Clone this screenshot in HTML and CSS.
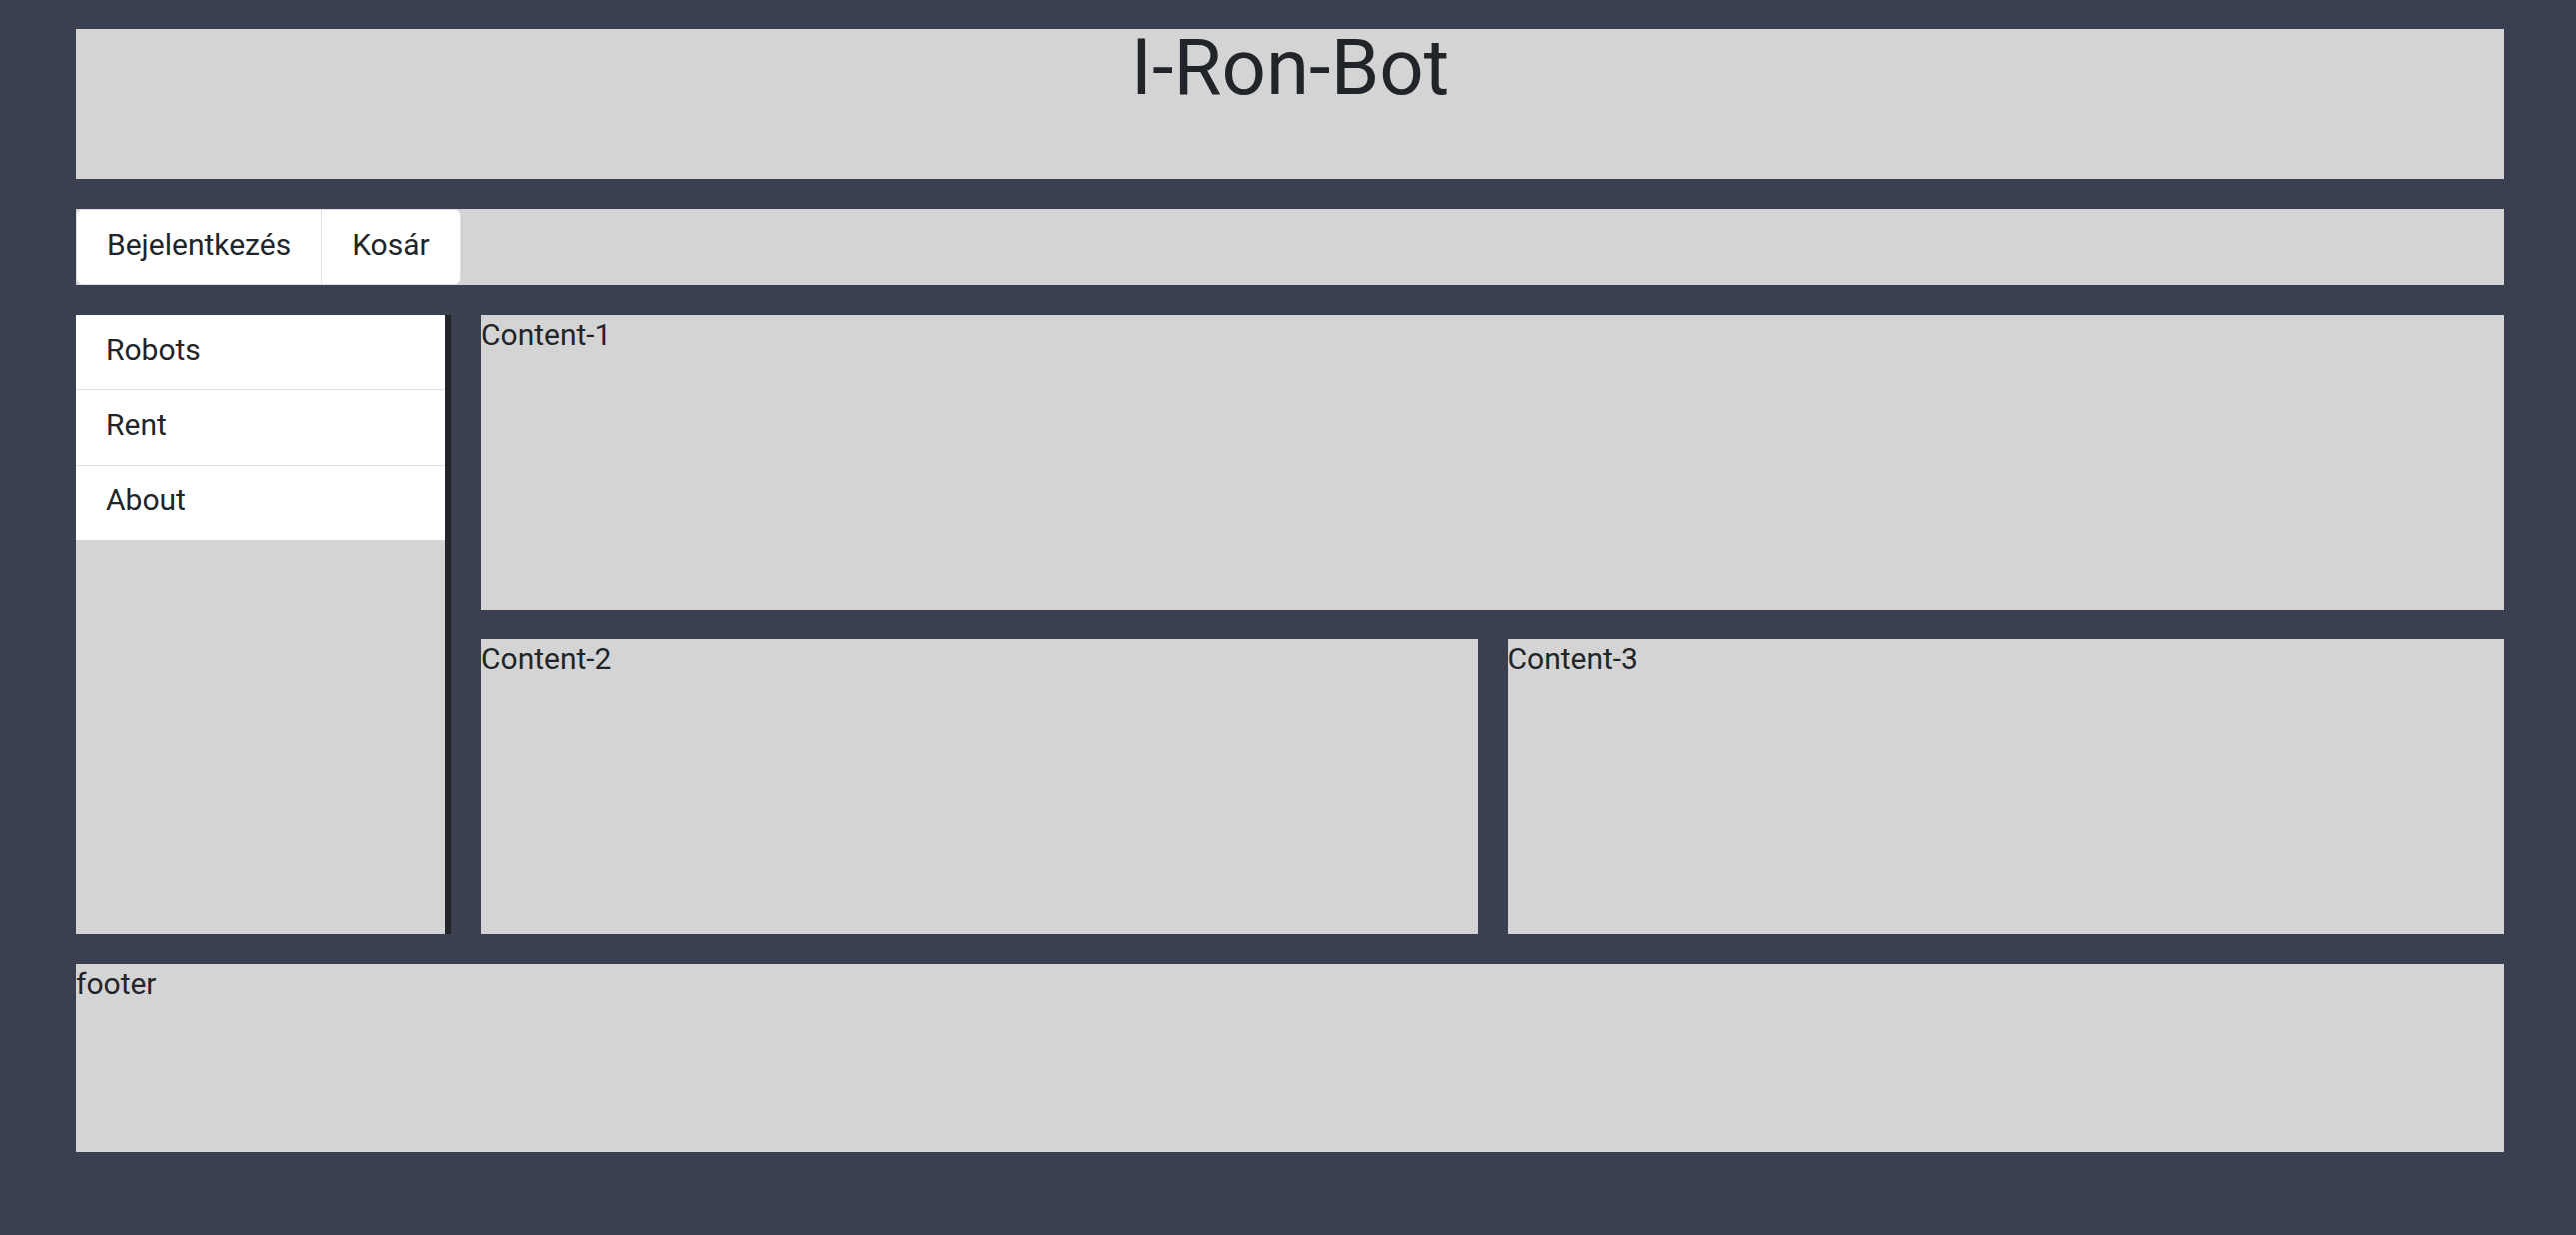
FILE: index.html
```html
<!DOCTYPE html>
<html lang="hu">
<head>
<meta charset="utf-8">
<title>I-Ron-Bot</title>
<link rel="stylesheet" href="styles.css">
</head>
<body>
<div class="page">
  <header class="header">
    <h1 class="title">I-Ron-Bot</h1>
  </header>
  <nav class="topnav">
    <ul class="navlist">
      <li class="navitem">Bejelentkezés</li>
      <li class="navitem">Kosár</li>
    </ul>
  </nav>
  <aside class="sidebar">
    <ul class="sidelist">
      <li class="sideitem">Robots</li>
      <li class="sideitem">Rent</li>
      <li class="sideitem">About</li>
    </ul>
  </aside>
  <section class="panel c1">Content-1</section>
  <section class="panel c2">Content-2</section>
  <section class="panel c3">Content-3</section>
  <footer class="panel footer">footer</footer>
</div>
</body>
</html>
```
FILE: styles.css
```css
* { box-sizing: border-box; }
html, body { margin: 0; padding: 0; }
body {
  background: #3a404f;
  font-family: Roboto, "Liberation Sans", Arial, sans-serif;
  font-size: 30px;
  line-height: 1.5;
  color: #212529;
}
.page {
  width: 2430px;
  margin-left: 76px;
  padding-top: 29px;
  display: grid;
  grid-template-columns: 375px 1fr 1fr;
  grid-template-rows: 150px auto 295px 295px 188px;
  column-gap: 30px;
  row-gap: 30px;
}
.header {
  grid-column: 1 / -1;
  background: #d4d4d4;
  text-align: center;
}
.title {
  margin: 0;
  font-size: 78px;
  font-weight: 400;
  line-height: 1;
}
.topnav {
  grid-column: 1 / -1;
  background: #d4d4d4;
  display: flex;
}
.navlist {
  list-style: none;
  margin: 0;
  padding: 0;
  display: flex;
  background: #fff;
  border: 1px solid #dee2e6;
  border-radius: 7px;
}
.navitem {
  padding: 11.8px 30px 17.4px;
}
.navitem + .navitem {
  border-left: 1px solid #dee2e6;
}
.sidebar {
  grid-column: 1;
  grid-row: 3 / 5;
  background: #d4d4d4;
  border-right: 6px solid #212529;
}
.sidelist {
  list-style: none;
  margin: 0;
  padding: 0;
  background: #fff;
}
.sideitem {
  padding: 11.8px 30px 17.4px;
  border-bottom: 1px solid #dee2e6;
}
.sideitem:last-child { border-bottom: 0; }
.panel {
  background: #d4d4d4;
  line-height: 1.3;
}
.c1 { grid-column: 2 / 4; grid-row: 3; }
.c2 { grid-column: 2; grid-row: 4; }
.c3 { grid-column: 3; grid-row: 4; }
.footer { grid-column: 1 / -1; grid-row: 5; }
```
